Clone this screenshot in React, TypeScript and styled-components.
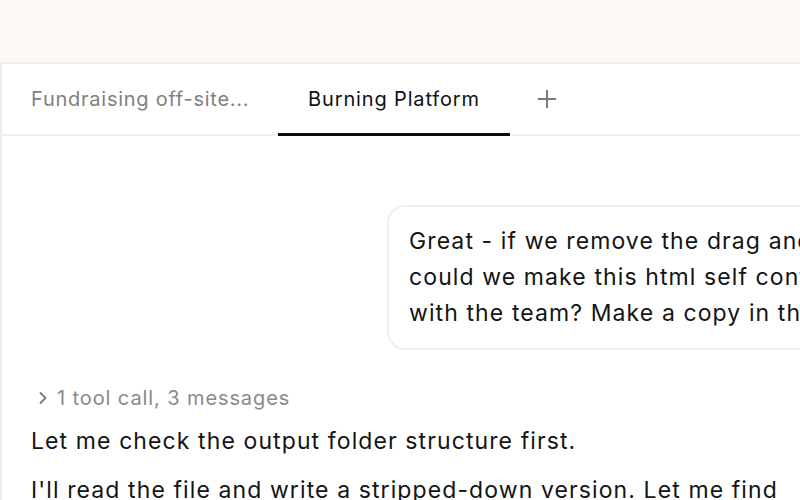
import React from "react";
import styled, { createGlobalStyle } from "styled-components";

const Global = createGlobalStyle`
  html, body { margin: 0; padding: 0; background: #fdf8f6; overflow: hidden; }
  body { font-family: Inter, "Noto Sans", sans-serif; -webkit-font-smoothing: antialiased; }
  * { box-sizing: border-box; }
`;

const Page = styled.div`
  width: 800px;
  height: 500px;
  display: flex;
  flex-direction: column;
  overflow: hidden;
`;

const TopBand = styled.div`
  height: 62px;
  flex: none;
  background: #fdf8f6;
`;

const Panel = styled.div`
  flex: 1;
  background: #ffffff;
  border-left: 2px solid #eeeeee;
  border-top: 2px solid #eeeeee;
  display: flex;
  flex-direction: column;
  min-width: 0;
`;

const TabBar = styled.div`
  height: 72px;
  flex: none;
  display: flex;
  align-items: stretch;
  border-bottom: 2px solid #efefef;
`;

const Tab = styled.div<{ $active?: boolean }>`
  display: flex;
  align-items: center;
  width: ${(p) => (p.$active ? "232px" : "276px")};
  padding: ${(p) => (p.$active ? "0" : "0 30px 0 29px")};
  justify-content: ${(p) => (p.$active ? "center" : "flex-start")};
  margin-bottom: -2px;
  font-size: 20px;
  letter-spacing: ${(p) => (p.$active ? "0.85px" : "0.75px")};
  color: ${(p) => (p.$active ? "#111111" : "#808080")};
  border-bottom: 3px solid ${(p) => (p.$active ? "#0d0d0d" : "transparent")};
  white-space: nowrap;
`;

const AddTab = styled.div`
  display: flex;
  align-items: center;
  padding: 0 26px 0 27px;
  color: #7a7a7a;
`;

const Content = styled.div`
  flex: 1;
  display: flex;
  flex-direction: column;
  padding: 69px 0 0 29px;
  width: 800px;
`;

const UserRow = styled.div`
  display: flex;
  padding-left: 356px;
`;

const Bubble = styled.div`
  flex: none;
  width: 700px;
  border: 2px solid #efefef;
  border-radius: 18px;
  padding: 16px 20px 17px 20px;
  font-size: 23px;
  line-height: 36px;
  color: #141414;
  white-space: nowrap;
  letter-spacing: 1.1px;
`;

const ToolLine = styled.div`
  display: flex;
  align-items: center;
  gap: 7px;
  margin-top: 33px;
  padding-left: 5px;
  font-size: 20px;
  line-height: 30px;
  letter-spacing: 0.9px;
  color: #8a8a8a;
`;

const Para = styled.p`
  margin: 0;
  font-size: 23px;
  line-height: 36px;
  color: #141414;
  letter-spacing: 1.1px;
  width: 760px;
  & + & { margin-top: 13px; }
`;

const Paras = styled.div`
  margin-top: 10px;
  display: flex;
  flex-direction: column;
`;

export default function App() {
  return (
    <Page>
      <Global />
      <TopBand />
      <Panel>
        <TabBar>
          <Tab>Fundraising off-site...</Tab>
          <Tab $active>Burning Platform</Tab>
          <AddTab>
            <svg width="20" height="20" viewBox="0 0 20 20" fill="none" stroke="currentColor" strokeWidth="2" strokeLinecap="butt">
              <path d="M10 1v18M1 10h18" />
            </svg>
          </AddTab>
        </TabBar>
        <Content>
          <UserRow>
            <Bubble>
              Great - if we remove the drag and drop feature,
              <br />
              could we make this html self contained to share it
              <br />
              with the team? Make a copy in the output folder.
            </Bubble>
          </UserRow>
          <ToolLine>
            <svg width="14" height="14" viewBox="0 0 14 14" fill="none" stroke="#7a7a7a" strokeWidth="1.8" strokeLinecap="round" strokeLinejoin="round">
              <path d="M4.5 2l5 5-5 5" />
            </svg>
            <span>1 tool call, 3 messages</span>
          </ToolLine>
          <Paras>
            <Para>Let me check the output folder structure first.</Para>
            <Para>
              I'll read the file and write a stripped-down version. Let me find the source file first.
            </Para>
          </Paras>
        </Content>
      </Panel>
    </Page>
  );
}
